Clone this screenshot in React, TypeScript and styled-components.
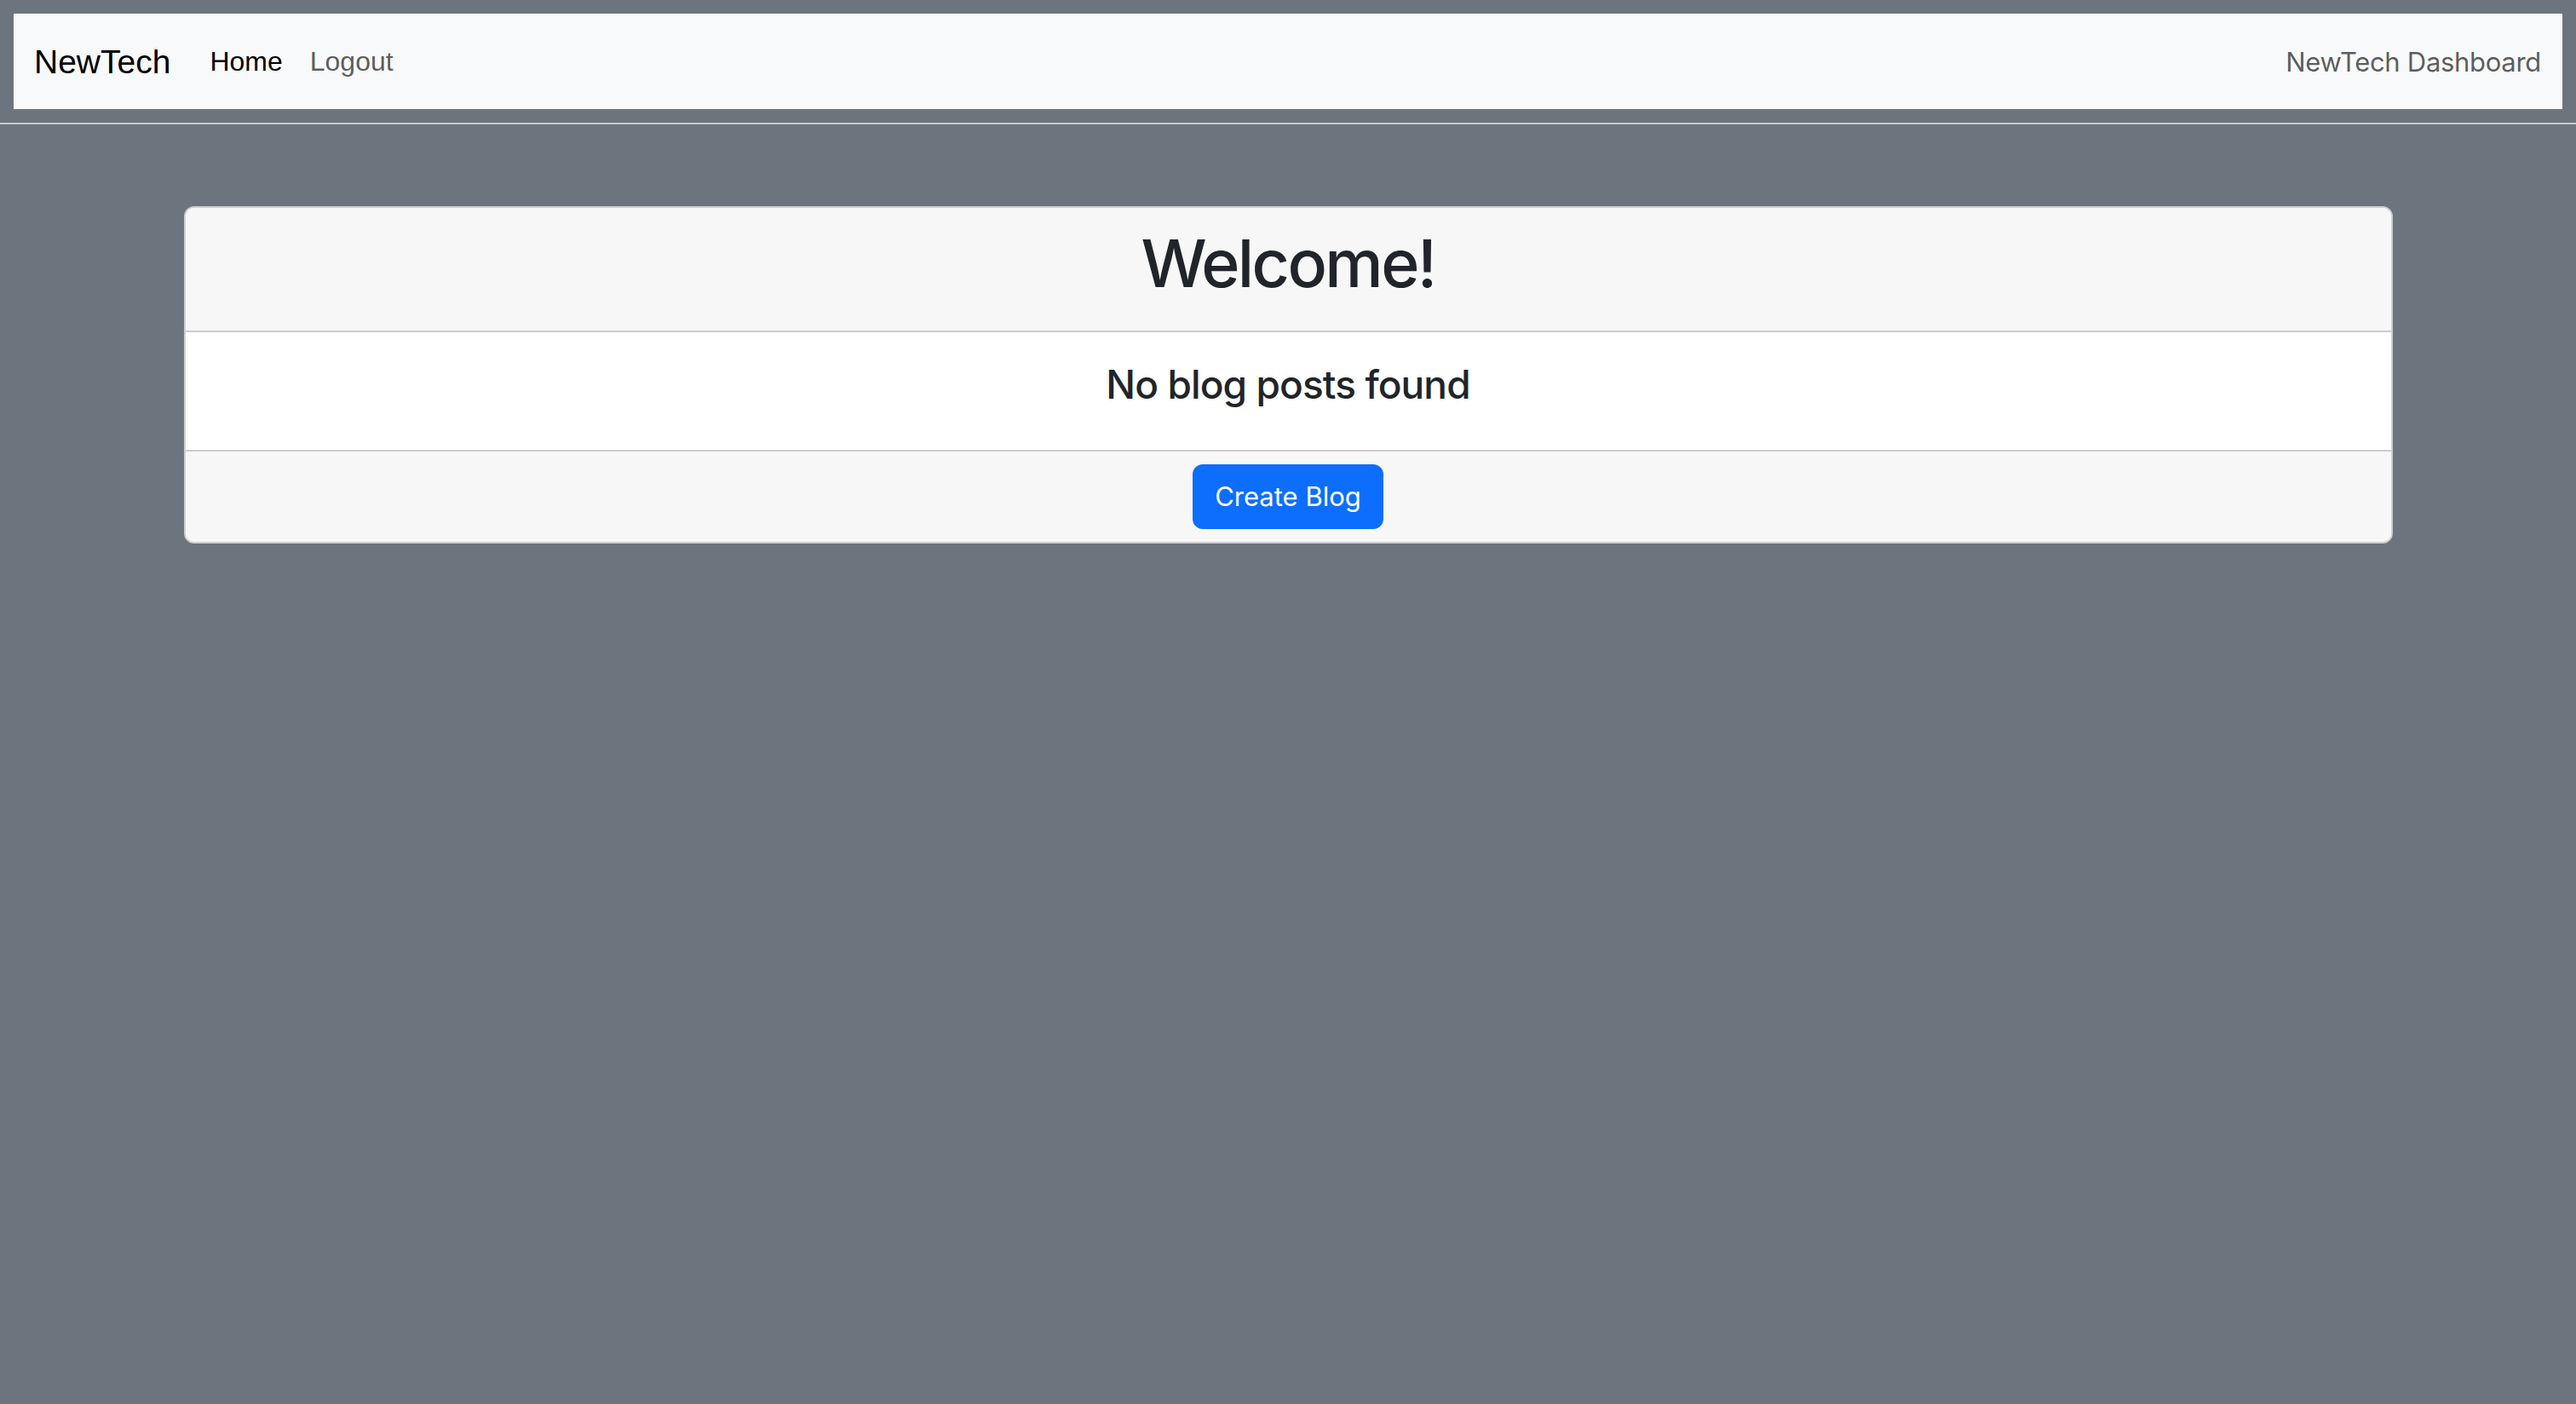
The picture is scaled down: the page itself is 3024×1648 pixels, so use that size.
import React from 'react';
import styled, { createGlobalStyle } from 'styled-components';

const GlobalStyle = createGlobalStyle`
  html, body {
    margin: 0;
    padding: 0;
  }
  body {
    background: #6c757d;
    min-height: 100vh;
    font-family: Inter, "Noto Sans", sans-serif;
    color: #212529;
  }
`;

const Header = styled.header`
  padding: 16px 16px 0;
`;

const Navbar = styled.nav`
  height: 112px;
  background: #f8f9fa;
  display: flex;
  align-items: center;
  padding: 0 25px 0 24px;
`;

const Brand = styled.a`
  font-family: "Liberation Sans", Arial, sans-serif;
  font-size: 39px;
  color: #000;
  text-decoration: none;
  margin-right: 30px;
  padding-top: 2px;
`;

const NavLinks = styled.div`
  display: flex;
  align-items: center;
  flex: 1;
`;

const NavLink = styled.a<{ $active?: boolean }>`
  font-family: "Liberation Sans", Arial, sans-serif;
  font-size: 32px;
  padding: 0 16px;
  color: ${p => (p.$active ? '#000' : 'rgba(0, 0, 0, 0.65)')};
  text-decoration: none;
`;

const NavText = styled.span`
  font-size: 31px;
  letter-spacing: -0.3px;
  color: rgba(0, 0, 0, 0.65);
`;

const Divider = styled.hr`
  margin: 16px 0 0;
  border: 0;
  height: 2px;
  background: #c7cacd;
`;

const Main = styled.main`
  padding-top: 96px;
`;

const Card = styled.section`
  width: 2593px;
  margin: 0 auto;
  background: #fff;
  border: 2px solid #cdcfd1;
  border-radius: 12px;
  overflow: hidden;
  box-sizing: border-box;
`;

const CardHeader = styled.div`
  background: #f7f7f7;
  padding: 17px 32px 15px;
  border-bottom: 2px solid #cccccc;
  text-align: center;
`;

const Title = styled.h1`
  margin: 0 0 16px;
  font-size: 77px;
  line-height: 96px;
  font-weight: 500;
  letter-spacing: -2.6px;
`;

const CardBody = styled.div`
  padding: 32px;
  text-align: center;
`;

const Subtitle = styled.h4`
  margin: 0 0 16px;
  font-size: 46px;
  line-height: 58px;
  font-weight: 500;
  letter-spacing: -0.9px;
`;

const CardFooter = styled.div`
  background: #f7f7f7;
  padding: 15px 32px 15px;
  border-top: 2px solid #cccccc;
  display: flex;
  justify-content: center;
`;

const Button = styled.button`
  font-family: Inter, "Noto Sans", sans-serif;
  font-size: 31px;
  line-height: 48px;
  padding: 12px 24px;
  border: 2px solid #0d6efd;
  border-radius: 12px;
  background: #0d6efd;
  color: #fff;
  cursor: pointer;
`;

export default function App() {
  return (
    <>
      <GlobalStyle />
      <Header>
        <Navbar>
          <Brand href="#">NewTech</Brand>
          <NavLinks>
            <NavLink href="#" $active>Home</NavLink>
            <NavLink href="#">Logout</NavLink>
          </NavLinks>
          <NavText>NewTech Dashboard</NavText>
        </Navbar>
      </Header>
      <Divider />
      <Main>
        <Card>
          <CardHeader>
            <Title>Welcome!</Title>
          </CardHeader>
          <CardBody>
            <Subtitle>No blog posts found</Subtitle>
          </CardBody>
          <CardFooter>
            <Button>Create Blog</Button>
          </CardFooter>
        </Card>
      </Main>
    </>
  );
}
